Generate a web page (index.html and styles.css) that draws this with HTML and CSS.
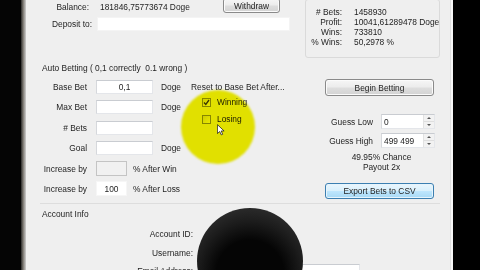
FILE: index.html
```html
<!DOCTYPE html>
<html>
<head>
<meta charset="utf-8">
<link rel="stylesheet" href="styles.css">
</head>
<body>
<div class="screen">
  <div class="bezel-left"></div>
  <div class="edge-left"></div>
  <main class="window">
    <section class="top">
      <div class="summary">
        <div class="row balance-row">
          <span class="lbl">Balance:</span>
          <span class="balance">181846,75773674 Doge</span>
          <button class="btn withdraw">Withdraw</button>
        </div>
        <div class="row deposit-row">
          <span class="lbl">Deposit to:</span>
          <span class="field deposit"></span>
        </div>
      </div>
      <div class="stats">
        <span class="s-lbl"># Bets:</span><span>1458930</span>
        <span class="s-lbl">Profit:</span><span>10041,61289478 Doge</span>
        <span class="s-lbl">Wins:</span><span>733810</span>
        <span class="s-lbl">% Wins:</span><span>50,2978 %</span>
      </div>
    </section>

    <section class="auto">
      <div class="group-title">Auto Betting ( 0,1 correctly  0.1 wrong )</div>
      <div class="auto-body">
        <div class="bet-form">
          <div class="bet-row"><span class="lbl">Base Bet</span><span class="field bet center">0,1</span><span class="unit">Doge</span></div>
          <div class="bet-row"><span class="lbl">Max Bet</span><span class="field bet"></span><span class="unit">Doge</span></div>
          <div class="bet-row"><span class="lbl"># Bets</span><span class="field bet"></span></div>
          <div class="bet-row"><span class="lbl">Goal</span><span class="field bet"></span><span class="unit">Doge</span></div>
          <div class="bet-row"><span class="lbl">Increase by</span><span class="field short disabled"></span><span class="suffix">% After Win</span></div>
          <div class="bet-row"><span class="lbl">Increase by</span><span class="field short plain center">100</span><span class="suffix">% After Loss</span></div>
        </div>
        <div class="reset">
          <div class="reset-title">Reset to Base Bet After...</div>
          <div class="check-row first"><span class="checkbox checked"><svg viewBox="0 0 9 9" width="9" height="9"><path d="M2 4.5 L3.8 6.5 L7 2" fill="none" stroke="#3a3a3a" stroke-width="1.3"/></svg></span><span>Winning</span></div>
          <div class="check-row second"><span class="checkbox"></span><span>Losing</span></div>
        </div>
        <div class="controls">
          <button class="btn begin">Begin Betting</button>
          <div class="guess-row first"><span class="lbl">Guess Low</span><span class="field spin"><span class="val">0</span><span class="spinner"><i class="up"></i><i class="down"></i></span></span></div>
          <div class="guess-row second"><span class="lbl">Guess High</span><span class="field spin"><span class="val">499 499</span><span class="spinner"><i class="up"></i><i class="down"></i></span></span></div>
          <div class="chance">49.95% Chance</div>
          <div class="chance">Payout 2x</div>
          <button class="btn export">Export Bets to CSV</button>
        </div>
      </div>
    </section>

    <section class="account">
      <div class="group-title">Account Info</div>
      <div class="acc-row first"><span class="lbl">Account ID:</span></div>
      <div class="acc-row"><span class="lbl">Username:</span></div>
      <div class="acc-row"><span class="lbl">Email Address:</span><span class="field email"></span></div>
    </section>
  </main>
  <div class="edge-right"></div>
  <div class="bezel-right"></div>

  <div class="highlight"></div>
  <svg class="cursor" viewBox="0 0 9 13" width="8" height="12"><path d="M0.5 0.5 L0.5 10.5 L3 8.2 L4.8 12 L6.4 11.3 L4.7 7.6 L8 7.6 Z" fill="#fff" stroke="#111" stroke-width="0.8" stroke-linejoin="round"/></svg>
  <div class="censor"></div>
</div>
</body>
</html>
```

FILE: styles.css
```css
* { box-sizing: border-box; margin: 0; padding: 0; }
html, body { width: 480px; height: 270px; overflow: hidden; background: #000; }
body {
  font-family: "Liberation Sans", Arial, sans-serif;
  font-size: 8.4px;
  line-height: 10px;
  color: #1e1e1e;
}
.screen { position: relative; display: flex; width: 480px; height: 270px; }
.bezel-left { width: 21px; flex: none; background: #050505; }
.edge-left { width: 5px; flex: none; background: linear-gradient(to right, #2a2a2a, #77736c 40%, #cfcfcf); }
.window {
  width: 424px; flex: none; height: 270px;
  background: #efefef;
  display: flex; flex-direction: column;
  overflow: hidden;
}
.edge-right { width: 3px; flex: none; background: #f7f7f7; border-left: 1px solid #e0e0e0; }
.bezel-right { flex: 1; background: #000; }

.field {
  display: flex; align-items: center;
  background: #fff;
  border: 1px solid #e4e6ea;
  border-top-color: #c9ccd1;
  border-left-color: #d6d8dc;
}
.center { justify-content: center; }
.btn {
  font: inherit; color: inherit;
  display: flex; align-items: center; justify-content: center;
  border: 1px solid #8a8a8a;
  border-radius: 3px;
  background: linear-gradient(#f6f6f6, #ececec 48%, #dedede 52%, #d3d3d3);
  box-shadow: inset 0 0 0 1px #fbfbfb;
}

/* top area */
.top { display: flex; height: 60px; flex: none; }
.summary { width: 279px; }
.row { display: flex; align-items: center; }
.balance-row { height: 13px; }
.balance-row .lbl { width: 63px; text-align: right; }
.balance { width: 123px; margin-left: 11px; white-space: nowrap; }
.withdraw { width: 57px; height: 15px; margin-top: -2px; }
.deposit-row { height: 14px; margin-top: 4px; }
.deposit-row .lbl { width: 66px; text-align: right; }
.deposit { width: 193px; height: 14px; margin-left: 5px; border-color: #f4f4f4; }

.stats {
  width: 135px; height: 59px; margin-top: -1px;
  border: 1px solid #dadada; border-radius: 3px;
  padding-top: 7px;
  display: grid;
  grid-template-columns: 36px auto;
  column-gap: 12px;
  grid-auto-rows: 10px;
  align-content: start;
  white-space: nowrap;
}
.s-lbl { text-align: right; }

/* auto betting */
.auto {
  flex: none; height: 144px;
  margin: 0 10px 0 14px; padding-left: 2px;
  border-bottom: 1px solid #dddddd;
}
.group-title { margin-top: 3px; height: 10px; white-space: pre; }
.auto-body { display: flex; }
.bet-form { width: 149px; flex: none; margin-top: 7px; display: flex; flex-direction: column; gap: 6.4px; }
.bet-row { display: flex; align-items: center; height: 14px; }
.bet-row .lbl { width: 45px; flex: none; text-align: right; white-space: nowrap; }
.bet { width: 57px; height: 14px; margin-left: 9px; flex: none; }
.unit { margin-left: 8px; }
.short { width: 31px; height: 15px; margin-left: 9px; flex: none; }
.disabled { background: #f1f1f1; border-color: #c4c4c4; }
.plain { border-color: #f6f6f6; }
.suffix { margin-left: 6px; white-space: nowrap; }

.reset { width: 134px; flex: none; }
.reset-title { margin-top: 9px; height: 10px; white-space: nowrap; }
.check-row { display: flex; align-items: center; height: 10px; padding-left: 11px; }
.check-row.first { margin-top: 5px; }
.check-row.second { margin-top: 7px; }
.checkbox {
  width: 9px; height: 9px; margin-right: 6px; flex: none;
  border: 1px solid #8e8f8f;
  background: linear-gradient(135deg, #dcdcdc, #fafafa);
  display: flex;
}
.checkbox svg { margin: -1px; }

.controls { width: 109px; flex: none; display: flex; flex-direction: column; }
.begin { margin-top: 6px; height: 17px; width: 109px; }
.guess-row { display: flex; align-items: center; height: 15px; }
.guess-row.first { margin-top: 18px; }
.guess-row.second { margin-top: 4px; }
.guess-row .lbl { width: 48px; flex: none; text-align: right; white-space: nowrap; }
.spin { width: 54px; height: 15px; margin-left: 8px; flex: none; justify-content: space-between; padding-left: 2px; }
.spinner { width: 11px; height: 13px; display: flex; flex-direction: column; border-left: 1px solid #e2e2e2; background: #f2f2f2; }
.spinner i { flex: 1; display: flex; align-items: center; justify-content: center; }
.spinner i::before { content: ""; border-left: 2px solid transparent; border-right: 2px solid transparent; }
.spinner .up { border-bottom: 1px solid #dedede; }
.spinner .up::before { border-bottom: 2px solid #555; }
.spinner .down::before { border-top: 2px solid #555; }
.chance { text-align: center; padding-left: 4px; height: 10px; white-space: nowrap; }
.guess-row.second + .chance { margin-top: 4px; }
.export {
  margin-top: 11px; height: 16px; width: 109px;
  border-color: #3c7fb1;
  background: linear-gradient(#eaf6fd, #d9f0fc 48%, #bee6fd 52%, #a7d9f5);
  box-shadow: inset 0 0 0 1px #e6f4fc;
}

/* account */
.account { flex: none; margin-left: 16px; padding-top: 2px; }
.account .group-title { margin-top: 3px; }
.acc-row { display: flex; align-items: center; height: 14px; margin-top: 4.5px; }
.acc-row.first { margin-top: 8px; }
.acc-row .lbl { width: 151px; flex: none; text-align: right; white-space: nowrap; }
.email { width: 160px; height: 14px; margin-left: 7px; }

/* overlays */
.highlight {
  position: absolute; left: 181px; top: 90px; width: 74px; height: 74px;
  border-radius: 50%;
  background: #f0ef00;
  mix-blend-mode: multiply;
  filter: blur(1.2px);
}
.cursor { position: absolute; left: 217px; top: 124px; }
.censor {
  position: absolute; left: 197px; top: 208px; width: 106px; height: 106px;
  border-radius: 50%;
  background: radial-gradient(circle at 50% 62%, #050505 40%, #1c1c1c 62%, #3e3e3e 100%);
  filter: blur(0.6px);
}
```
